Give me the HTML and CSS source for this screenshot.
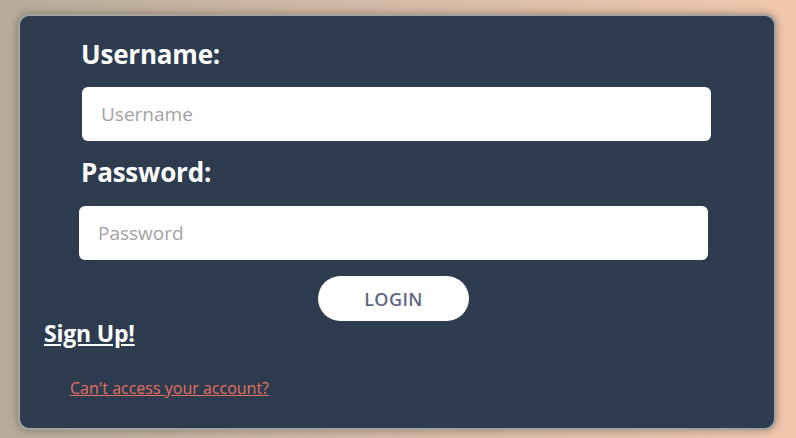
FILE: index.html
```html
<!DOCTYPE html>
<html lang="en">

<head>
    <meta charset="UTF-8">
    <meta name="viewport" content="width=device-width, initial-scale=1.0">
    <title>Login</title>
    <link rel="stylesheet" href="styles.css">
</head>

<body>
    <div class="card">
        <form class="login-form" onsubmit="return false">
            <label class="field-label" for="username">Username:</label>
            <input class="field field-user" type="text" id="username" placeholder="Username">

            <label class="field-label" for="password">Password:</label>
            <input class="field field-pass" type="password" id="password" placeholder="Password">

            <button class="login-btn" type="submit">LOGIN</button>
        </form>

        <a class="signup" href="#">Sign Up!</a>
        <a class="forgot" href="#">Can't access your account?</a>
    </div>
</body>

</html>
```

FILE: styles.css
```css
* {
    box-sizing: border-box;
}

html,
body {
    height: 100%;
}

body {
    margin: 0;
    padding: 14px 20px 8px 18px;
    font-family: "Open Sans", "Noto Sans", sans-serif;
    background: linear-gradient(90deg, #b6ab9a 0%, #d3baa6 45%, #f1c8ad 100%);
}

.card {
    width: 758px;
    height: 416px;
    background: #2d3c4f;
    border: 2px solid #a3a3a1;
    border-radius: 11px;
    box-shadow: 0 0 8px rgba(60, 50, 40, 0.45);
    padding: 20px 0 0 0;
}

.login-form {
    display: flex;
    flex-direction: column;
    align-items: flex-start;
    padding-left: 61px;
}

.field-label {
    color: #fff;
    font-weight: 700;
    font-size: 26px;
    line-height: 36px;
    letter-spacing: -0.2px;
}

.field {
    width: 629px;
    height: 54px;
    border: none;
    border-radius: 6px;
    background: #fff;
    padding: 0 19px;
    font-family: inherit;
    font-size: 19px;
    color: #333;
}

.field::placeholder {
    color: #a3a3a3;
}

.field-user {
    margin: 15px 0 13px 1px;
}

.field-pass {
    margin: 16px 0 16px -2px;
}

.login-btn {
    align-self: flex-start;
    margin-left: 237px;
    width: 151px;
    height: 45px;
    border: none;
    border-radius: 23px;
    background: #fff;
    color: #5f6983;
    font-family: inherit;
    font-size: 18px;
    font-weight: 600;
    letter-spacing: 0.4px;
    cursor: pointer;
}

.signup {
    display: inline-block;
    margin: -2px 0 0 24px;
    color: #fff;
    font-weight: 700;
    font-size: 23px;
    line-height: 28px;
    letter-spacing: -0.2px;
}

.forgot {
    display: block;
    width: max-content;
    margin: 30px 0 0 50px;
    color: #e8705f;
    font-size: 16px;
    line-height: 22px;
}
```
